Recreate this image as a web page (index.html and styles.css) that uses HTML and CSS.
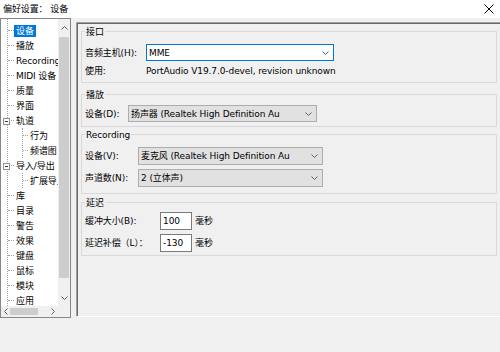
FILE: index.html
```html
<!DOCTYPE html>
<html lang="zh-CN">
<head>
  <meta charset="UTF-8" />
  <title>偏好设置：设备</title>
  <link rel="stylesheet" href="styles.css">
</head>
<body>

  <div class="titlebar">
    <span>偏好设置： 设备</span>
    <svg class="close" viewBox="0 0 10 10"><path d="M0.5 0.5 L9.5 9.5 M9.5 0.5 L0.5 9.5" /></svg>
  </div>

  <div class="main">
    <div class="tree">
      <div class="tree-view">
        <ul class="tree-root">
          <li class="node"><span class="stub"></span><span class="label selected">设备</span></li>
          <li class="node"><span class="stub"></span><span class="label">播放</span></li>
          <li class="node"><span class="stub"></span><span class="label">Recording</span></li>
          <li class="node"><span class="stub"></span><span class="label">MIDI 设备</span></li>
          <li class="node"><span class="stub"></span><span class="label">质量</span></li>
          <li class="node"><span class="stub"></span><span class="label">界面</span></li>
          <li class="node"><span class="stub"><i class="toggle"></i></span><span class="label">轨道</span></li>
          <li>
            <ul class="tree-children">
              <li class="node"><span class="stub"></span><span class="label">行为</span></li>
              <li class="node"><span class="stub"></span><span class="label">频谱图</span></li>
            </ul>
          </li>
          <li class="node"><span class="stub"><i class="toggle"></i></span><span class="label">导入/导出</span></li>
          <li>
            <ul class="tree-children">
              <li class="node"><span class="stub"></span><span class="label">扩展导入</span></li>
            </ul>
          </li>
          <li class="node"><span class="stub"></span><span class="label">库</span></li>
          <li class="node"><span class="stub"></span><span class="label">目录</span></li>
          <li class="node"><span class="stub"></span><span class="label">警告</span></li>
          <li class="node"><span class="stub"></span><span class="label">效果</span></li>
          <li class="node"><span class="stub"></span><span class="label">键盘</span></li>
          <li class="node"><span class="stub"></span><span class="label">鼠标</span></li>
          <li class="node"><span class="stub"></span><span class="label">模块</span></li>
          <li class="node"><span class="stub"></span><span class="label">应用</span></li>
        </ul>
      </div>

      <div class="vscroll">
        <div class="sb-btn up"><svg class="arrow" viewBox="0 0 7 4"><polyline points="0.5,3.5 3.5,0.5 6.5,3.5" /></svg></div>
        <div class="thumb-v"></div>
        <div class="track"></div>
        <div class="sb-btn down"><svg class="arrow" viewBox="0 0 7 4"><polyline points="0.5,0.5 3.5,3.5 6.5,0.5" /></svg></div>
      </div>

      <div class="hscroll">
        <div class="sb-btn left"><svg class="arrow-h" viewBox="0 0 4 7"><polyline points="3.5,0.5 0.5,3.5 3.5,6.5" /></svg></div>
        <div class="thumb-h"></div>
        <div class="track"></div>
        <div class="sb-btn right"><svg class="arrow-h" viewBox="0 0 4 7"><polyline points="0.5,0.5 3.5,3.5 0.5,6.5" /></svg></div>
      </div>

      <div class="corner"></div>
    </div>

    <div class="panel">
      <div class="group g-api">
        <div class="group-title">接口</div>
        <div class="field">
          <span>音频主机(H):</span>
          <div class="combo focus">MME<svg class="chev" viewBox="0 0 7 4"><polyline points="0.5,0.5 3.5,3.5 6.5,0.5" /></svg></div>
        </div>
        <div class="field text-row">
          <span>使用:</span>
          <span>PortAudio V19.7.0-devel, revision unknown</span>
        </div>
      </div>

      <div class="group g-play">
        <div class="group-title">播放</div>
        <div class="field">
          <span>设备(D):</span>
          <div class="combo">扬声器 (Realtek High Definition Au<svg class="chev" viewBox="0 0 7 4"><polyline points="0.5,0.5 3.5,3.5 6.5,0.5" /></svg></div>
        </div>
      </div>

      <div class="group g-rec">
        <div class="group-title">Recording</div>
        <div class="field">
          <span>设备(V):</span>
          <div class="combo">麦克风 (Realtek High Definition Au<svg class="chev" viewBox="0 0 7 4"><polyline points="0.5,0.5 3.5,3.5 6.5,0.5" /></svg></div>
        </div>
        <div class="field">
          <span>声道数(N):</span>
          <div class="combo">2 (立体声)<svg class="chev" viewBox="0 0 7 4"><polyline points="0.5,0.5 3.5,3.5 6.5,0.5" /></svg></div>
        </div>
      </div>

      <div class="group g-lat">
        <div class="group-title">延迟</div>
        <div class="field">
          <span>缓冲大小(B):</span>
          <div class="num">100</div>
          <span>毫秒</span>
        </div>
        <div class="field">
          <span>延迟补偿（L）：</span>
          <div class="num">-130</div>
          <span>毫秒</span>
        </div>
      </div>
    </div>
  </div>

</body>
</html>
```

FILE: styles.css
```css
body {
  margin: 0;
  width: 500px;
  height: 352px;
  overflow: hidden;
  background: #f0f0f0;
  font-family: "DejaVu Sans", "Noto Sans CJK SC", sans-serif;
  font-size: 9px;
  line-height: 12px;
  letter-spacing: -0.1px;
  color: #000;
}

ul {
  list-style: none;
  margin: 0;
  padding: 0;
}

/* title bar */

.titlebar {
  height: 18px;
  background: #fff;
  display: flex;
  align-items: center;
  justify-content: space-between;
  padding: 0 6px 0 3px;
}

.close {
  width: 10px;
  height: 10px;
  stroke: #000;
  stroke-width: 1;
  fill: none;
}

.main {
  display: flex;
  align-items: flex-start;
}

/* tree on the left */

.tree {
  width: 71px;
  height: 300px;
  box-sizing: border-box;
  border: 1px solid #828790;
  background: #fff;
  display: grid;
  grid-template-columns: 57px 12px;
  grid-template-rows: 287px 11px;
  flex: none;
}

.tree-view {
  overflow: hidden;
}

.tree-root {
  margin-left: 6px;
  padding-top: 4px;
  border-left: 1px dotted #a0a0a0;
}

.tree-children {
  margin-left: 14px;
  border-left: 1px dotted #a0a0a0;
}

.node {
  height: 15px;
  display: flex;
  align-items: center;
  white-space: nowrap;
}

.stub {
  width: 6px;
  height: 0;
  flex: none;
  border-top: 1px dotted #a0a0a0;
  display: flex;
  align-items: center;
}

.tree-children .stub {
  width: 5px;
}

.toggle {
  width: 7px;
  height: 7px;
  box-sizing: border-box;
  border: 1px solid #919191;
  background: #fff;
  margin-left: -5px;
  display: flex;
  align-items: center;
  justify-content: center;
  flex: none;
}

.toggle::after {
  content: "";
  width: 3px;
  height: 1px;
  background: #333;
}

.label {
  padding: 0 2px;
  line-height: 12px;
}

.label.selected {
  background: #0078d7;
  color: #fff;
}

/* scrollbars */

.vscroll, .hscroll {
  background: #f0f0f0;
  display: flex;
}

.vscroll {
  flex-direction: column;
}

.sb-btn {
  display: flex;
  align-items: center;
  justify-content: center;
  flex: none;
}

.vscroll .up { height: 18px; }
.vscroll .down { height: 16px; }
.hscroll .left { width: 9px; }
.hscroll .right { width: 11px; }

.track {
  flex: 1;
}

.thumb-v {
  height: 241px;
  margin: 0 1px;
  background: #cdcdcd;
}

.thumb-h {
  width: 28px;
  margin: 2px 0;
  background: #cdcdcd;
}

.arrow {
  width: 7px;
  height: 4px;
}

.arrow-h {
  width: 4px;
  height: 7px;
}

.arrow, .arrow-h, .chev {
  fill: none;
  stroke: #606060;
  stroke-width: 1;
}

.corner {
  background: #f0f0f0;
}

/* settings panel */

.panel {
  margin: 4px 0 0 5px;
  width: 430px;
  height: 295px;
  box-sizing: border-box;
  border: 1px solid;
  border-color: #a0a0a0 #fff #fff #a0a0a0;
  box-shadow: inset 1px 1px #696969;
  padding: 8px 0 0 4px;
  flex: none;
}

.group {
  width: 416px;
  box-sizing: border-box;
  border: 1px solid #d9d9d9;
  padding: 0 0 4px 3px;
  display: flex;
  flex-direction: column;
}

.group-title {
  width: fit-content;
  margin-top: -6px;
  padding: 0 1px;
  background: #f0f0f0;
  line-height: 12px;
}

.field {
  display: grid;
  align-items: center;
  white-space: nowrap;
}

.combo {
  height: 17px;
  box-sizing: border-box;
  border: 1px solid #adadad;
  background: #e1e1e1;
  display: flex;
  align-items: center;
  justify-content: space-between;
  padding: 0 4px 0 2px;
  overflow: hidden;
}

.combo.focus {
  border-color: #0078d7;
  background: #fff;
}

.chev {
  width: 7px;
  height: 4px;
  flex: none;
}

.num {
  height: 18px;
  box-sizing: border-box;
  border: 1px solid #7a7a7a;
  background: #fff;
  padding-left: 2px;
  display: flex;
  align-items: center;
}

.g-api .group-title { margin-bottom: 3px; }
.g-api { gap: 3px; padding-bottom: 4px; }
.g-api .field { grid-template-columns: 61px 188px; }
.g-api .text-row { height: 14px; }

.g-play { margin-top: 11px; }
.g-play .group-title { margin-bottom: 4px; }
.g-play .field { grid-template-columns: 43px 189px; }

.g-rec { margin-top: 7px; gap: 4px; padding-bottom: 6px; }
.g-rec .group-title { margin-bottom: 2px; }
.g-rec .field { grid-template-columns: 53px 185px; }
.g-rec .combo { height: 18px; }

.g-lat { margin-top: 8px; gap: 4px; padding-bottom: 3px; }
.g-lat .group-title { margin-bottom: -1px; }
.g-lat .field { grid-template-columns: 72px 32px auto; column-gap: 3px; }
```
